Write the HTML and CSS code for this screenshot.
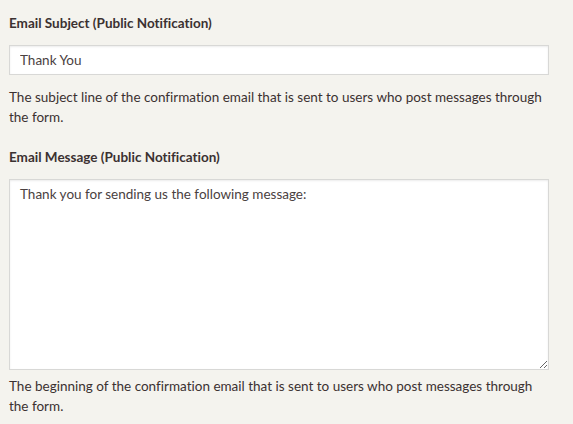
FILE: index.html
```html
<!DOCTYPE html>
<html>
<head>
<meta charset="utf-8">
<link rel="stylesheet" href="styles.css">
</head>
<body>
<div class="form">
  <div class="field">
    <label class="label">Email Subject (Public Notification)</label>
    <input class="input" type="text" value="Thank You">
    <p class="help help-input">The subject line of the confirmation email that is sent to users who post messages through the form.</p>
  </div>
  <div class="field">
    <label class="label">Email Message (Public Notification)</label>
    <textarea class="textarea">Thank you for sending us the following message:</textarea>
    <p class="help">The beginning of the confirmation email that is sent to users who post messages through the form.</p>
  </div>
</div>
</body>
</html>
```
FILE: styles.css
```css
html, body {
  margin: 0;
  padding: 0;
  background: #f4f3ee;
}
body {
  font-family: Lato, "Open Sans", sans-serif;
  font-feature-settings: "liga" 0;
  color: #3b3131;
  font-size: 13.5px;
}
.form {
  width: 540px;
  padding: 13px 0 0 9px;
}
.field {
  margin-bottom: 20px;
}
.label {
  display: block;
  font-weight: bold;
  font-size: 13.5px;
  line-height: 20px;
  margin-bottom: 12px;
}
.input, .textarea {
  display: block;
  box-sizing: border-box;
  width: 540px;
  border: 1px solid #d8d8d6;
  box-shadow: inset 0 1px 2px rgba(0,0,0,0.08);
  background: #fff;
  font-family: inherit;
  font-feature-settings: "liga" 0;
  font-size: 13.5px;
  color: #4a4141;
  padding: 4px 10px;
  margin: 0;
  outline: none;
}
.input {
  height: 30px;
}
.textarea {
  height: 191px;
  resize: vertical;
  padding: 4px 10px;
  line-height: 20px;
}
.help {
  margin: 6px 0 0;
  line-height: 20px;
}
.help-input {
  margin-top: 12px;
}
```
